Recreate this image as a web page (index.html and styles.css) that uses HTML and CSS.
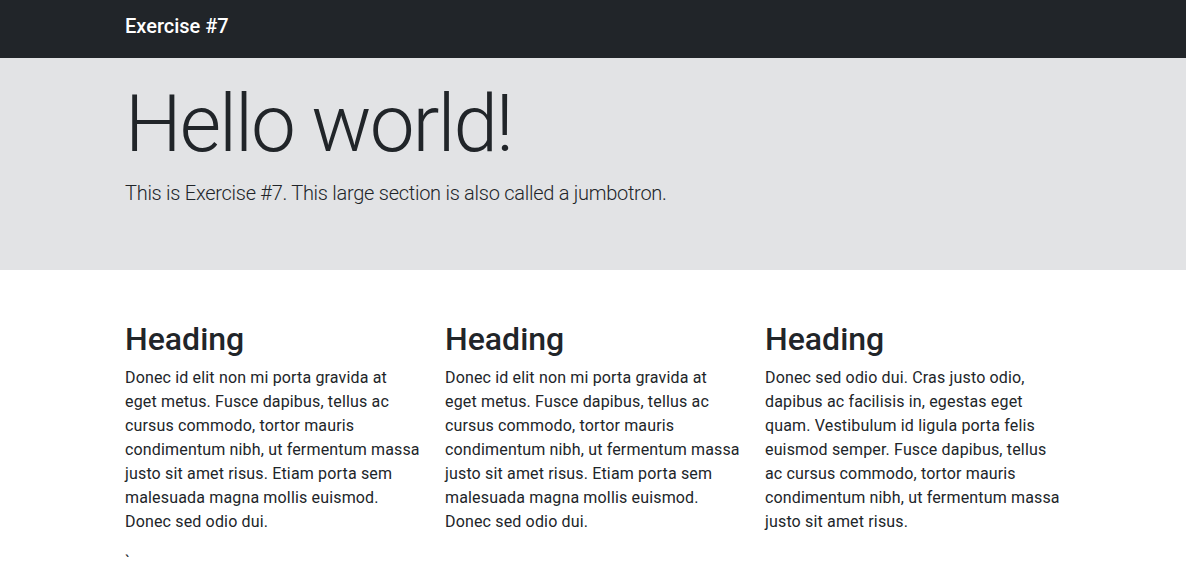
FILE: index.html
```html
<!DOCTYPE html>
<html lang="en">
<head>
<meta charset="utf-8">
<title>Exercise #7</title>
<link rel="stylesheet" href="styles.css">
</head>
<body>
<nav class="navbar">
  <div class="container">
    <a class="brand" href="#">Exercise #7</a>
  </div>
</nav>
<section class="jumbotron">
  <div class="container">
    <h1 class="display">Hello world!</h1>
    <p class="lead">This is Exercise #7. This large section is also called a jumbotron.</p>
  </div>
</section>
<main class="content">
  <div class="container">
    <div class="row">
      <div class="col">
        <h2>Heading</h2>
        <p>Donec id elit non mi porta gravida at eget metus. Fusce dapibus, tellus ac cursus commodo, tortor mauris condimentum nibh, ut fermentum massa justo sit amet risus. Etiam porta sem malesuada magna mollis euismod. Donec sed odio dui.</p>
        <span class="stray">`</span>
      </div>
      <div class="col">
        <h2>Heading</h2>
        <p>Donec id elit non mi porta gravida at eget metus. Fusce dapibus, tellus ac cursus commodo, tortor mauris condimentum nibh, ut fermentum massa justo sit amet risus. Etiam porta sem malesuada magna mollis euismod. Donec sed odio dui.</p>
      </div>
      <div class="col">
        <h2>Heading</h2>
        <p>Donec sed odio dui. Cras justo odio, dapibus ac facilisis in, egestas eget quam. Vestibulum id ligula porta felis euismod semper. Fusce dapibus, tellus ac cursus commodo, tortor mauris condimentum nibh, ut fermentum massa justo sit amet risus.</p>
      </div>
    </div>
  </div>
</main>
</body>
</html>
```
FILE: styles.css
```css
* { box-sizing: border-box; }
html, body { margin: 0; padding: 0; }
body {
  font-family: Roboto, "Noto Sans", "Liberation Sans", sans-serif;
  font-size: 16px;
  line-height: 24px;
  color: #212529;
  background: #fff;
}
.container {
  width: 960px;
  margin: 0 auto;
  padding: 0 12px;
}
.navbar {
  background: #212529;
  height: 58px;
  padding-top: 11px;
}
.brand {
  color: #fff;
  text-decoration: none;
  font-size: 20px;
  font-weight: 500;
  line-height: 30px;
}
.jumbotron {
  background: #e2e3e5;
  padding: 18px 0 46px;
}
.display {
  margin: 0 0 6px;
  font-size: 80px;
  font-weight: 300;
  line-height: 96px;
  letter-spacing: -2px;
}
.lead {
  margin: 0 0 16px;
  font-size: 20px;
  font-weight: 300;
  line-height: 30px;
  letter-spacing: -0.27px;
}
.content {
  padding-top: 50px;
}
.row {
  display: flex;
  margin: 0 -12px;
}
.col {
  flex: 0 0 320px;
  padding: 0 12px;
  letter-spacing: 0.16px;
}
h2 {
  margin: 0 0 8px;
  font-size: 32px;
  font-weight: 500;
  line-height: 38px;
  letter-spacing: 0;
}
.col p {
  margin: 0 0 16px;
}
.stray {
  color: #212529;
}
```
